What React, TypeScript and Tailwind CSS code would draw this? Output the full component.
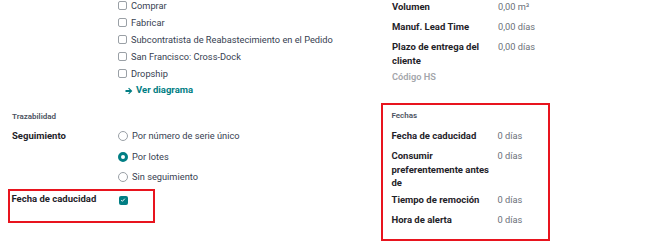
import React from "react";

const teal = "text-[#017e84]";

function Box() {
  return <span className="inline-block w-[9px] h-[9px] border border-[#9aa0a6] rounded-[2px] bg-white shrink-0" />;
}

function Radio({ on }: { on?: boolean }) {
  return on ? (
    <span className="inline-block w-[10px] h-[10px] rounded-full border-[3px] border-[#017e84] bg-white shrink-0" />
  ) : (
    <span className="inline-block w-[10px] h-[10px] rounded-full border border-[#9aa0a6] bg-white shrink-0" />
  );
}

function CheckRow({ label }: { label: string }) {
  return (
    <div className="h-[17px] flex items-center gap-[4px]">
      <Box />
      <span className="text-[#374151]">{label}</span>
    </div>
  );
}

function RadioRow({ label, on }: { label: string; on?: boolean }) {
  return (
    <div className="h-[20.5px] flex items-center gap-[4px]">
      <Radio on={on} />
      <span className="text-[#374151]">{label}</span>
    </div>
  );
}

function FieldRow({ label, value, cls = "" }: { label: React.ReactNode; value?: string; cls?: string }) {
  return (
    <div className={"flex leading-[13.5px] " + cls}>
      <div className="w-[106px] font-bold text-[#1f2329] text-[9.5px]">{label}</div>
      {value && <div className="text-[#6b7079]">{value}</div>}
    </div>
  );
}

export default function App() {
  return (
    <div
      className="w-[657px] h-[243px] bg-white overflow-hidden flex text-[9.25px]"
      style={{ fontFamily: "Roboto, 'Liberation Sans', sans-serif" }}
    >
      {/* Left column */}
      <div className="w-[380px] pl-[12px]">
        <div className="flex">
          <div className="w-[106px]" />
          <div className="-mt-[3px]">
            <CheckRow label="Comprar" />
            <CheckRow label="Fabricar" />
            <CheckRow label="Subcontratista de Reabastecimiento en el Pedido" />
            <CheckRow label="San Francisco: Cross-Dock" />
            <CheckRow label="Dropship" />
            <div className={"h-[17px] flex items-center gap-[3px] pl-[7px] font-bold text-[9.5px] " + teal}>
              <svg width="8" height="8" viewBox="0 0 16 16" className="shrink-0">
                <path d="M1 6.2h8.5L6.3 3 8 1.3 14.7 8 8 14.7 6.3 13l3.2-3.2H1z" fill="#017e84" />
              </svg>
              <span>Ver diagrama</span>
            </div>
          </div>
        </div>

        <div className="mt-[13px] text-[8px] font-semibold text-[#4b5260] leading-[10px]">Trazabilidad</div>

        <div className="flex mt-[4px]">
          <div className="w-[106px] font-bold text-[#1f2329] text-[9.5px] leading-[20.5px]">Seguimiento</div>
          <div>
            <RadioRow label="Por número de serie único" />
            <RadioRow label="Por lotes" on />
            <RadioRow label="Sin seguimiento" />
          </div>
        </div>

        <div className="mt-[1px] -ml-[4px] w-[147px] h-[34px] border-[2.5px] border-[#e8141e] pl-[1.5px] pt-[1.5px]">
          <div className="flex items-center h-[14px]">
            <div className="w-[106px] font-bold text-[#1f2329] text-[9.5px]">Fecha de caducidad</div>
            <span className="inline-flex items-center justify-center w-[9px] h-[9px] rounded-[2px] bg-[#017e84] ml-[1px] mt-[2px]">
              <svg width="6" height="6" viewBox="0 0 10 10">
                <path d="M2 5.2l2 2 4-4.4" stroke="white" strokeWidth="1.6" fill="none" />
              </svg>
            </span>
          </div>
        </div>
      </div>

      {/* Right column */}
      <div className="flex-1">
        <div className="pl-[12px] pt-[0.25px]">
          <FieldRow label="Volumen" value="0,00 m³" cls="mb-[6.5px]" />
          <FieldRow label="Manuf. Lead Time" value="0,00 días" cls="mb-[6.5px]" />
          <FieldRow label={<>Plazo de entrega del<br />cliente</>} value="0,00 días" cls="mb-[2.5px]" />
          <div className="leading-[13.5px] text-[#a3a6ab] font-semibold">Código HS</div>
        </div>

        <div className="mt-[19.5px] ml-[1px] w-[169px] h-[138px] border-[2.5px] border-[#e8141e] pl-[8.5px]">
          <div className="mt-[6.5px] text-[8px] font-semibold text-[#4b5260] leading-[10px]">Fechas</div>
          <div className="mt-[8px]">
            <FieldRow label="Fecha de caducidad" value="0 días" cls="mb-[6.5px]" />
            <FieldRow label={<>Consumir<br />preferentemente antes<br />de</>} value="0 días" cls="mb-[3.5px]" />
            <FieldRow label="Tiempo de remoción" value="0 días" cls="mb-[6.5px]" />
            <FieldRow label="Hora de alerta" value="0 días" />
          </div>
        </div>
      </div>
    </div>
  );
}
